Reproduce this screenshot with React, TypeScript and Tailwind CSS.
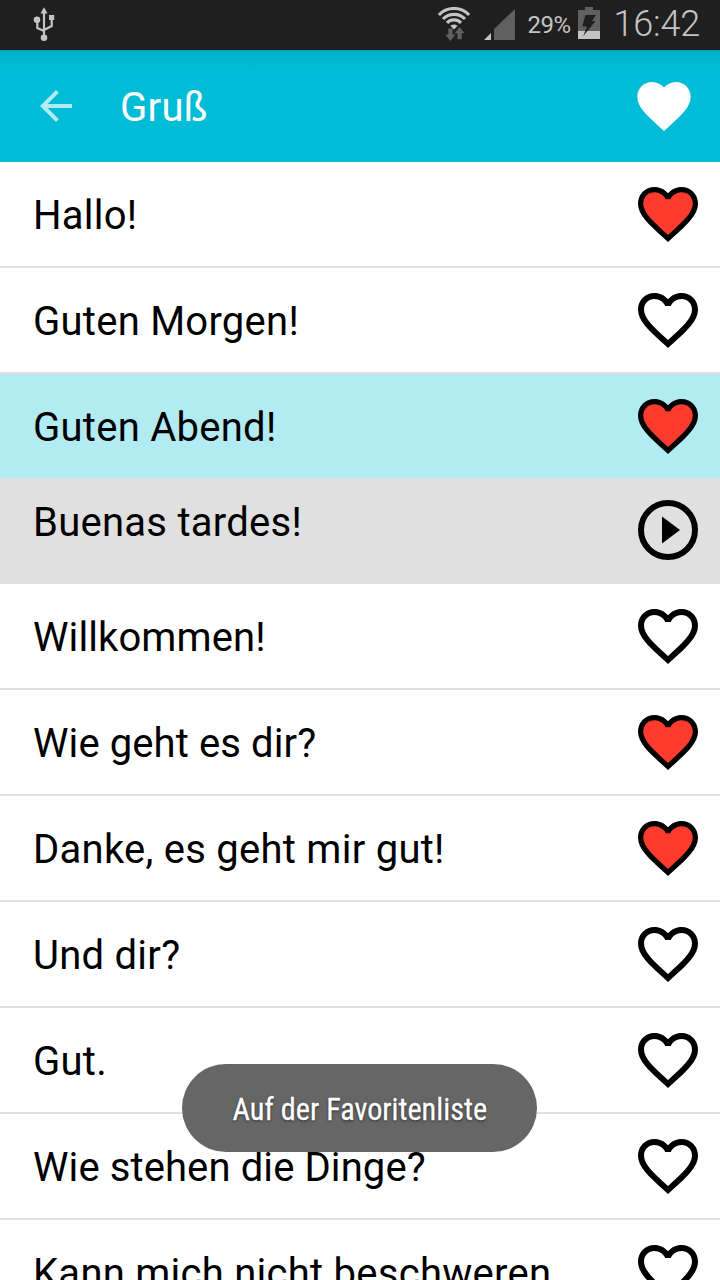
import React, { useState } from "react";

const HEART =
  "M12 21.35l-1.45-1.32C5.4 15.36 2 12.28 2 8.5 2 5.42 4.42 3 7.5 3c1.74 0 3.41.81 4.5 2.09C13.09 3.81 14.76 3 16.5 3 19.58 3 22 5.42 22 8.5c0 3.78-3.4 6.86-8.55 11.54L12 21.35z";
const HEART_INNER =
  "M12.1 18.55l-.1.1-.1-.1C7.14 14.24 4 11.39 4 8.5 4 6.5 5.5 5 7.5 5c1.54 0 3.04.99 3.57 2.36h1.87C13.46 5.99 14.96 5 16.5 5c2 0 3.5 1.5 3.5 3.5 0 2.89-3.14 5.74-7.9 10.05z";

type Phrase = { text: string; favorite: boolean; translation?: string };

const initialPhrases: Phrase[] = [
  { text: "Hallo!", favorite: true },
  { text: "Guten Morgen!", favorite: false },
  { text: "Guten Abend!", favorite: true, translation: "Buenas tardes!" },
  { text: "Willkommen!", favorite: false },
  { text: "Wie geht es dir?", favorite: true },
  { text: "Danke, es geht mir gut!", favorite: true },
  { text: "Und dir?", favorite: false },
  { text: "Gut.", favorite: false },
  { text: "Wie stehen die Dinge?", favorite: false },
  { text: "Kann mich nicht beschweren.", favorite: false },
];

function HeartIcon({ filled }: { filled: boolean }) {
  return (
    <svg viewBox="0 0 24 24" className="size-[72px] shrink-0">
      <path d={HEART + HEART_INNER} fillRule="evenodd" fill="#000" />
      {filled && <path d={HEART_INNER} fill="#ff3b2d" stroke="#ff3b2d" strokeWidth={0.5} />}
    </svg>
  );
}

function StatusBar() {
  return (
    <div className="flex h-[50px] shrink-0 items-center bg-[#1f1f1f] text-[#c4c4c4]">
      {/* USB */}
      <svg viewBox="0 0 24 36" className="ml-8 h-9 w-6" fill="none" stroke="#c4c4c4" strokeWidth={2.2}>
        <path d="M12 4v27M12 24l-6.7-3v-7M12 23l7.7-4v-7" />
        <path d="M12 .2l3.5 6.3h-7z" fill="#c4c4c4" stroke="none" />
        <circle cx="5" cy="12.7" r="3.3" fill="#c4c4c4" stroke="none" />
        <path d="M17 8h5.2v5H17z" fill="#c4c4c4" stroke="none" />
        <circle cx="12" cy="30.8" r="3.3" fill="#c4c4c4" stroke="none" />
      </svg>
      <div className="flex-1" />
      {/* Wifi */}
      <svg viewBox="0 0 36 36" className="h-9 w-9" fill="none" stroke="#c4c4c4" strokeWidth={3.2}>
        <path d="M2.9 8A20.8 20.8 0 0 1 33.1 8M7 12a15.3 15.3 0 0 1 22 0M11 15.800a9.8 9.8 0 0 1 14 0" />
        <path d="M14.3 18.8q3.7-2.5 7.4 0L18 22.5z" fill="#c4c4c4" stroke="none" />
        <path d="M12.300 21.500h4.200v6h3L14.400 34l-5.100-6.500h3z" fill="#606060" stroke="none" />
        <path d="M21.500 32.300h4.200v-6h3l-5.100-6.300-5.100 6.300h3z" fill="#606060" stroke="none" />
      </svg>
      {/* Signal */}
      <svg viewBox="0 0 32 32" className="ml-3 h-8 w-8">
        <path d="M31 0v31H10V20z" fill="#606060" />
        <path d="M7 24v7H0z" fill="#c4c4c4" />
      </svg>
      <span className="ml-3 w-[43px] text-2xl whitespace-nowrap tracking-[-0.5px]">29%</span>
      {/* Battery */}
      <svg viewBox="0 0 22 32" className="mb-1 ml-[7px] h-8 w-[22px]">
        <path d="M7 0h8v3h7v21H0V3h7z" fill="#606060" />
        <path d="M0 24h22v8H0z" fill="#c4c4c4" />
        <path d="M7.5 8H18l-4 6h3.5L5.3 29l3.700-9.500H4.300z" fill="#1f1f1f" />
      </svg>
      <span className="mr-5 mb-0.5 ml-3.5 text-4xl leading-none font-light tracking-[-0.2px]">16:42</span>
    </div>
  );
}

export default function App() {
  const [phrases, setPhrases] = useState(initialPhrases);

  const toggle = (index: number) => {
    setPhrases(phrases.map((p, i) => (i === index ? { ...p, favorite: !p.favorite } : p)));
  };

  return (
    <div className="relative flex h-[1280px] w-[720px] flex-col overflow-hidden bg-white font-[Roboto,sans-serif] text-black">
      <StatusBar />

      {/* Header */}
      <header className="flex h-28 shrink-0 items-center bg-[#00bcd6] bg-[linear-gradient(to_bottom,#0299ae_0,#02b0c8_2px,#02b6cf_7px,#00bcd6_20px)] pr-6 pl-8">
        <button aria-label="Zurück">
          <svg viewBox="0 0 24 24" className="size-12" fill="#b2ebf2">
            <path d="M20 11H7.83l5.59-5.59L12 4l-8 8 8 8 1.41-1.41L7.83 13H20v-2z" />
          </svg>
        </button>
        <h1 className="ml-10 flex-1 pt-1 text-[40px] leading-none tracking-[0.3px] text-white">Gruß</h1>
        <svg viewBox="0 0 24 24" className="size-16" fill="#fff">
          <path d={HEART} />
        </svg>
      </header>

      <ul className="shrink-0">
        {phrases.map((phrase, i) => (
          <li key={phrase.text}>
            <div
              className={`flex items-center pr-4 pl-8 ${
                phrase.translation ? "h-[104px] bg-[#b2ebf2]" : "h-[106px] border-b-2 border-[#e0e0e0]"
              }`}
            >
              <span
                className={`flex-1 pt-1 pl-px text-[40px] leading-[48px] whitespace-nowrap ${
                  phrase.text.startsWith("W") ? "tracking-[0.1px]" : "tracking-[0.26px]"
                }`}
              >
                {phrase.text}
              </span>
              <button onClick={() => toggle(i)} aria-label="Favorit">
                <HeartIcon filled={phrase.favorite} />
              </button>
            </div>
            {phrase.translation && (
              <div className="flex h-[106px] items-start bg-[#e0e0e0] pt-4 pr-4 pl-8">
                <span className="mt-[5px] flex-1 pl-px text-[40px] leading-[48px] tracking-[0.26px] whitespace-nowrap">
                  {phrase.translation}
                </span>
                <svg viewBox="0 0 24 24" className="size-[72px]">
                  <circle cx="12" cy="12" r="9" fill="none" stroke="#000" strokeWidth={2} />
                  <path d="M10 16.5l6-4.5-6-4.5v9z" />
                </svg>
              </div>
            )}
          </li>
        ))}
      </ul>

      {/* Toast */}
      <div className="absolute top-[1064px] left-[182px] flex h-[88px] w-[355px] items-center justify-center rounded-full bg-[#646464]/99">
        <span className="scale-x-[0.945] pt-px text-[32px] whitespace-nowrap text-white [font-stretch:75%] [-webkit-text-stroke:0.3px_#fff] [text-shadow:0_1px_3px_rgba(0,0,0,0.7)]">
          Auf der Favoritenliste
        </span>
      </div>
    </div>
  );
}
